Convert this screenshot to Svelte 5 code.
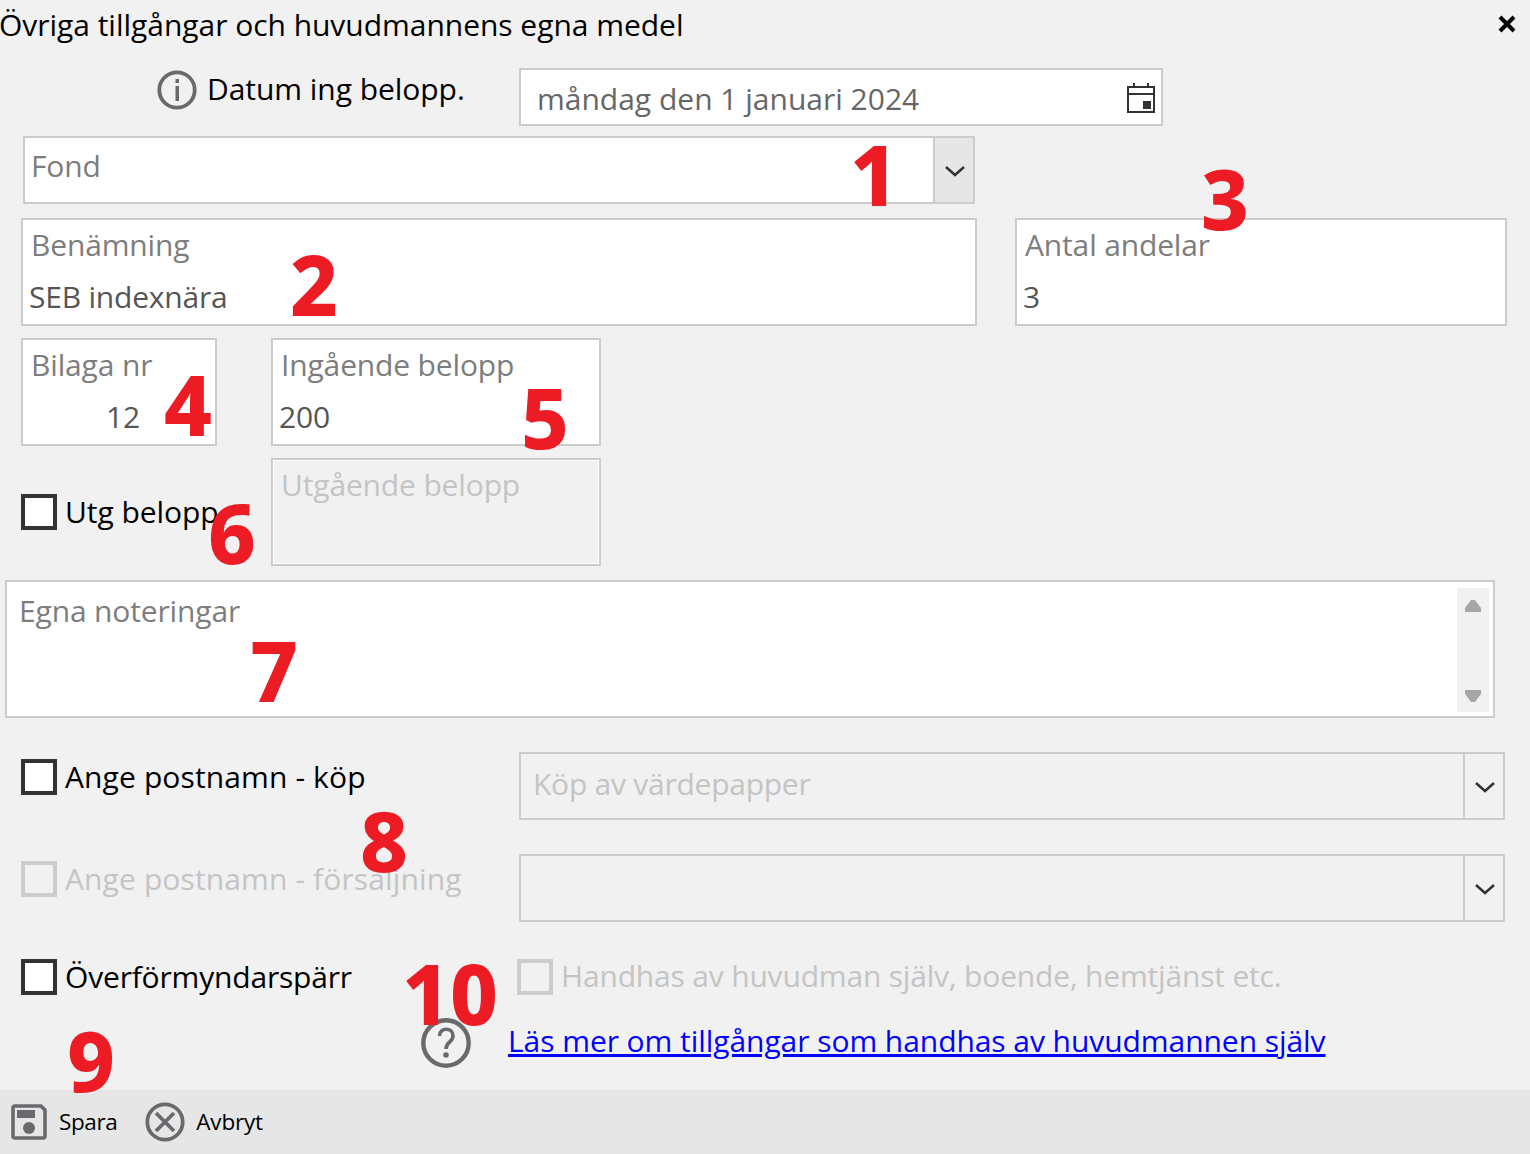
<script>
  const marks = [
    { n: '1', x: 850, y: 119 },
    { n: '2', x: 290, y: 229 },
    { n: '3', x: 1201, y: 143 },
    { n: '4', x: 164, y: 349 },
    { n: '5', x: 521, y: 362 },
    { n: '6', x: 208, y: 477 },
    { n: '7', x: 250, y: 615 },
    { n: '8', x: 360, y: 785 },
    { n: '9', x: 67, y: 1005 },
    { n: '10', x: 402, y: 938 }
  ];
</script>

<div class="page">
  <main class="form">
    <header class="title-row">
      <span class="title">Övriga tillgångar och huvudmannens egna medel</span>
      <svg class="close" viewBox="0 0 20 20" width="20" height="20">
        <path d="M3 3 L17 17 M17 3 L3 17" stroke="#000" stroke-width="4" fill="none" />
      </svg>
    </header>

    <div class="date-row">
      <div class="date-label">
        <svg viewBox="0 0 40 40" width="40" height="40">
          <circle cx="20" cy="20" r="17.7" fill="none" stroke="#696a6e" stroke-width="3.8" />
          <rect x="18.5" y="9" width="3.5" height="4" fill="#696a6e" />
          <rect x="18.5" y="16" width="3.5" height="15" fill="#696a6e" />
        </svg>
        <span class="date-text">Datum ing belopp.</span>
      </div>
      <div class="date-input">
        <span class="date-value">måndag den 1 januari 2024</span>
        <svg class="cal" viewBox="0 0 28 30" width="28" height="30">
          <path d="M1 4 H27 V29 H1 Z" fill="none" stroke="#333" stroke-width="2" />
          <path d="M1 11 H27" stroke="#333" stroke-width="2" />
          <path d="M7 0 V5 M21 0 V5" stroke="#333" stroke-width="2" />
          <rect x="16" y="18" width="8" height="8" fill="#333" />
        </svg>
      </div>
    </div>

    <div class="combo fond">
      <span class="combo-text placeholder">Fond</span>
      <span class="combo-btn grey">
        <svg viewBox="0 0 20 12" width="20" height="12"><path d="M1 2 L10 10 L19 2" fill="none" stroke="#333" stroke-width="2.5" /></svg>
      </span>
    </div>

    <div class="row name-row">
      <div class="field benamning"><span class="placeholder">Benämning</span><span class="value">SEB indexnära</span></div>
      <div class="field antal"><span class="placeholder">Antal andelar</span><span class="value">3</span></div>
    </div>

    <div class="row amount-row">
      <div class="field bilaga"><span class="placeholder">Bilaga nr</span><span class="value right">12</span></div>
      <div class="field belopp"><span class="placeholder">Ingående belopp</span><span class="value">200</span></div>
    </div>

    <div class="row out-row">
      <label class="check-label utg"><span class="check"></span>Utg belopp</label>
      <div class="field belopp disabled"><span class="placeholder">Utgående belopp</span></div>
    </div>

    <div class="notes">
      <span class="placeholder">Egna noteringar</span>
      <div class="scrollbar">
        <svg viewBox="0 0 16 12" width="16" height="12"><path d="M6 0 H10 L16 8 V12 H0 V8 Z" fill="#a6a6a6" /></svg>
        <svg viewBox="0 0 16 12" width="16" height="12"><path d="M6 12 H10 L16 4 V0 H0 V4 Z" fill="#a6a6a6" /></svg>
      </div>
    </div>

    <div class="post-row first">
      <label class="check-label wide"><span class="check"></span>Ange postnamn - köp</label>
      <div class="combo post">
        <span class="combo-text off">Köp av värdepapper</span>
        <span class="combo-btn">
          <svg viewBox="0 0 20 12" width="20" height="12"><path d="M1 2 L10 10 L19 2" fill="none" stroke="#333" stroke-width="2.5" /></svg>
        </span>
      </div>
    </div>

    <div class="post-row">
      <label class="check-label off wide"><span class="check"></span>Ange postnamn - försäljning</label>
      <div class="combo post">
        <span class="combo-text"></span>
        <span class="combo-btn">
          <svg viewBox="0 0 20 12" width="20" height="12"><path d="M1 2 L10 10 L19 2" fill="none" stroke="#333" stroke-width="2.5" /></svg>
        </span>
      </div>
    </div>

    <div class="post-row guard">
      <label class="check-label"><span class="check"></span>Överförmyndarspärr</label>
      <label class="check-label off self"><span class="check"></span><span class="self-text">Handhas av huvudman själv, boende, hemtjänst etc.</span></label>
    </div>

    <div class="help-row">
      <svg viewBox="0 0 50 50" width="50" height="50">
        <circle cx="25" cy="25" r="22.7" fill="none" stroke="#696a6e" stroke-width="4.4" />
        <path d="M18.5 18 C18.5 9 32 9 32 18 C32 24 25 24 25 31" fill="none" stroke="#696a6e" stroke-width="3.6" />
        <circle cx="25" cy="37" r="2.8" fill="#696a6e" />
      </svg>
      <a href="#top">Läs mer om tillgångar som handhas av huvudmannen själv</a>
    </div>
  </main>

  <footer class="toolbar">
    <button class="tool">
      <svg viewBox="0 0 36 36" width="36" height="36">
        <path d="M2 4 Q2 2 4 2 H30 L34 6 V32 Q34 34 32 34 H4 Q2 34 2 32 Z" fill="none" stroke="#696a6e" stroke-width="3.6" />
        <rect x="6" y="6" width="18" height="8" fill="#696a6e" />
        <circle cx="18" cy="24" r="6" fill="#696a6e" />
      </svg>
      <span class="spara">Spara</span>
    </button>
    <button class="tool cancel">
      <svg viewBox="0 0 40 40" width="40" height="40">
        <circle cx="20" cy="20" r="17.7" fill="none" stroke="#696a6e" stroke-width="3.8" />
        <path d="M11 11 L29 29 M29 11 L11 29" stroke="#696a6e" stroke-width="3.8" />
      </svg>
      Avbryt
    </button>
  </footer>

  {#each marks as m}
    <span class="mark" style="left:{m.x}px;top:{m.y}px">{m.n}</span>
  {/each}
</div>

<style>
  :global(body) {
    margin: 0;
    background: #f1f1f1;
  }

  .page {
    position: relative;
    width: 1530px;
    height: 1154px;
    overflow: hidden;
    display: flex;
    flex-direction: column;
    background: #f1f1f1;
    font-family: "Open Sans", "Noto Sans", sans-serif;
    font-size: 30px;
    color: #000;
  }

  .form {
    flex: 1;
  }

  .placeholder {
    color: #7d7d7d;
    letter-spacing: -0.15px;
  }

  .title-row {
    height: 68px;
    display: flex;
    justify-content: space-between;
    padding: 4px 13px 0 0;
    box-sizing: border-box;
  }

  .title {
    line-height: 42px;
    margin-left: -1px;
    letter-spacing: -0.03px;
  }

  .close {
    margin-top: 10px;
  }

  .date-row {
    display: flex;
    height: 58px;
  }

  .date-label {
    width: 362px;
    margin-left: 157px;
    display: flex;
    gap: 11px;
    align-items: flex-start;
    padding-top: 2px;
    box-sizing: border-box;
  }

  .date-text {
    margin-top: -2px;
    margin-left: -1px;
    letter-spacing: -0.05px;
  }

  .date-input {
    width: 644px;
    box-sizing: border-box;
    display: flex;
    justify-content: space-between;
    align-items: center;
    padding: 0 6px 0 16px;
    border: 2px solid #ccc;
    background: #fff;
    color: #666;
  }

  .date-value {
    margin-top: 2px;
  }

  .cal {
    margin-top: 2px;
  }

  .combo {
    display: flex;
    height: 68px;
    box-sizing: border-box;
    border: 2px solid #ccc;
  }

  .fond {
    width: 952px;
    margin: 10px 0 0 23px;
    background: #fff;
  }

  .combo-text {
    flex: 1;
    padding: 7px 0 0 6px;
  }

  .combo-btn {
    width: 38px;
    display: flex;
    align-items: center;
    justify-content: center;
    padding-top: 2px;
    padding-left: 2px;
    box-sizing: border-box;
    border-left: 2px solid #ccc;
    flex: none;
    width: 40px;
  }

  .combo-btn.grey {
    background: #e6e6e6;
  }

  .row {
    display: flex;
    height: 108px;
    margin: 12px 0 0 21px;
  }

  .name-row {
    margin-top: 14px;
    gap: 38px;
  }

  .amount-row,
  .out-row {
    gap: 54px;
  }

  .field {
    box-sizing: border-box;
    border: 2px solid #ccc;
    background: #fff;
    display: flex;
    flex-direction: column;
    padding: 3px 8px;
  }

  .field .placeholder {
    line-height: 44px;
  }

  .value {
    line-height: 44px;
    margin-top: 8px;
    margin-left: -2px;
    color: #555;
    letter-spacing: -0.2px;
  }

  .value.right {
    text-align: right;
    margin-right: 67px;
  }

  .benamning {
    width: 956px;
  }

  .antal {
    width: 492px;
  }

  .bilaga {
    width: 196px;
  }

  .belopp {
    width: 330px;
  }

  .disabled {
    background: #f1f1f1;
    box-shadow: inset 0 0 0 1px #fff;
  }

  .disabled .placeholder {
    color: #c4c4c4;
  }

  .check-label {
    display: flex;
    align-items: center;
    gap: 8px;
    height: 36px;
    line-height: 34px;
    white-space: nowrap;
  }

  .check {
    width: 36px;
    height: 36px;
    box-sizing: border-box;
    border: 4px solid #333;
    background: #fff;
    flex: none;
  }

  .wide {
    letter-spacing: 0.12px;
  }

  .utg {
    width: 196px;
    margin-top: 36px;
    letter-spacing: -0.05px;
  }

  .off {
    color: #c4c4c4;
  }

  .off .check {
    border-color: #ccc;
    background: #f1f1f1;
  }

  .notes {
    position: relative;
    width: 1490px;
    height: 138px;
    margin: 14px 0 0 5px;
    box-sizing: border-box;
    border: 2px solid #ccc;
    background: #fff;
    padding: 8px 12px;
  }

  .scrollbar {
    position: absolute;
    top: 6px;
    right: 4px;
    bottom: 4px;
    width: 32px;
    padding: 12px 0 10px;
    box-sizing: border-box;
    background: #f1f1f1;
    display: flex;
    flex-direction: column;
    justify-content: space-between;
    align-items: center;
  }

  .post-row {
    display: flex;
    height: 68px;
    margin: 34px 0 0 21px;
  }

  .post-row .check-label {
    width: 498px;
    margin-top: 7px;
  }

  .post {
    width: 986px;
  }

  .post .combo-text {
    padding-top: 9px;
    padding-left: 12px;
    letter-spacing: -0.25px;
  }

  .guard {
    height: 36px;
    margin-top: 37px;
  }

  .guard .check-label {
    margin-top: 0;
    width: 496px;
    letter-spacing: -0.18px;
  }

  .guard .self {
    width: auto;
  }

  .self-text {
    margin-top: -2px;
  }

  .help-row {
    display: flex;
    align-items: center;
    gap: 37px;
    margin: 23px 0 0 421px;
  }

  .help-row a {
    color: #00f;
    margin-top: -6px;
    letter-spacing: -0.06px;
  }

  .toolbar {
    height: 64px;
    background: #e6e6e6;
    display: flex;
    align-items: center;
    padding-left: 11px;
    gap: 28px;
  }

  .tool {
    display: flex;
    align-items: center;
    gap: 12px;
    border: 0;
    padding: 0;
    background: none;
    font: inherit;
    font-size: 22.5px;
    line-height: 28px;
    color: #000;
  }

  .spara {
    letter-spacing: -0.4px;
  }

  .cancel {
    gap: 11px;
    letter-spacing: -0.2px;
  }

  .mark {
    position: absolute;
    font-family: "Noto Sans", sans-serif;
    font-weight: 800;
    font-size: 83px;
    line-height: 110px;
    color: #ed1c24;
  }
</style>
